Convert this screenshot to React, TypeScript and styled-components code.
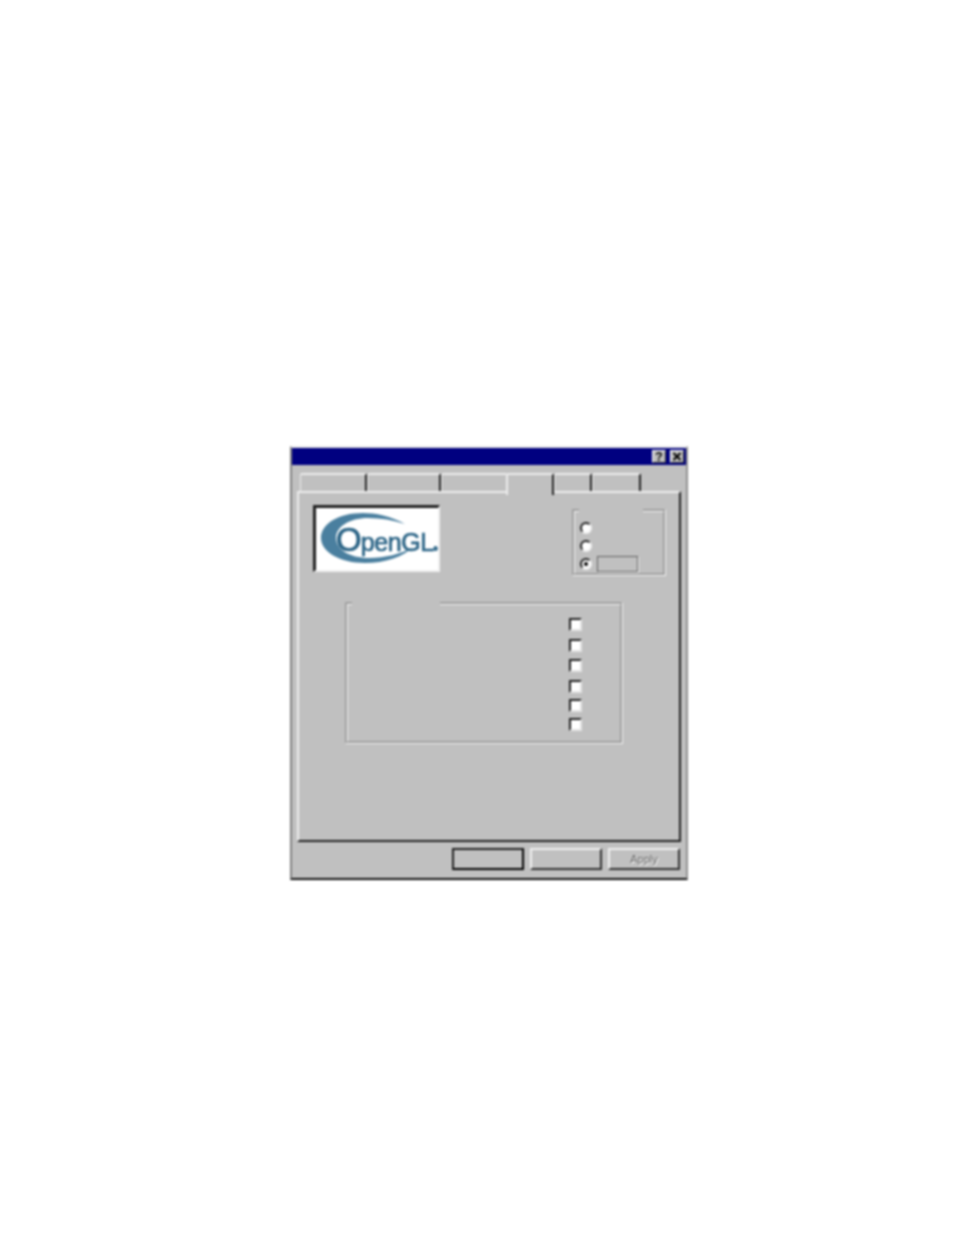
import React from "react";
import styled, { createGlobalStyle } from "styled-components";

const Global = createGlobalStyle`
  html, body { margin: 0; padding: 0; background: #fff; }
  body { font-family: "Liberation Sans", Arial, sans-serif; font-size: 11px; }
`;

const Page = styled.div`
  width: 954px;
  height: 1235px;
  box-sizing: border-box;
  padding: 446px 0 0 290px;
`;

const Window = styled.div`
  width: 398px;
  height: 434px;
  box-sizing: border-box;
  background: #c0c0c0;
  border-style: solid;
  border-width: 2px;
  border-color: #e8e8e8 #909090 #101010 #808080;
  display: flex;
  flex-direction: column;
  filter: blur(0.8px);
`;

const TitleBar = styled.div`
  height: 17px;
  flex: none;
  background: #000080;
  display: flex;
  align-items: center;
  justify-content: flex-end;
  gap: 4px;
  padding-right: 2px;
`;

const TitleButton = styled.div`
  width: 14px;
  height: 13px;
  box-sizing: border-box;
  background: #c0c0c0;
  border-style: solid;
  border-width: 1px;
  border-color: #fff #303030 #303030 #fff;
  display: flex;
  align-items: center;
  justify-content: center;
  color: #000;
  font-weight: bold;
  font-size: 12px;
  line-height: 1;
`;

const TabRow = styled.div`
  display: flex;
  align-items: flex-end;
  height: 20px;
  margin: 8px 0 -2px;
  padding-left: 8px;
  position: relative;
  z-index: 1;
`;

const Tab = styled.div<{ $w: number; $active?: boolean }>`
  width: ${(p) => p.$w + (p.$active ? 2 : 0)}px;
  height: ${(p) => (p.$active ? 22 : 18)}px;
  margin-bottom: ${(p) => (p.$active ? -2 : 2)}px;
  margin-left: ${(p) => (p.$active ? -2 : 0)}px;
  position: relative;
  z-index: ${(p) => (p.$active ? 1 : 0)};
  box-sizing: border-box;
  background: #c0c0c0;
  border-style: solid;
  border-width: 2px 2px 0 ${(p) => (p.$active ? 2 : 1)}px;
  border-color: #ececec #202020 transparent #ececec;
  border-radius: 2px 2px 0 0;
`;

const Panel = styled.div`
  height: 351px;
  flex: none;
  margin: 0 5px;
  box-sizing: border-box;
  background: #c0c0c0;
  border-style: solid;
  border-width: 2px;
  border-color: #ececec #202020 #202020 #ececec;
  padding: 12px 13px 0 14px;
`;

const TopRow = styled.div`
  display: flex;
  justify-content: space-between;
  align-items: flex-start;
`;

const LogoFrame = styled.div`
  width: 127px;
  height: 67px;
  box-sizing: border-box;
  background: #fff;
  border-style: solid;
  border-width: 3px 2px 2px 3px;
  border-color: #202020 #f0f0f0 #f0f0f0 #202020;
  position: relative;
  overflow: hidden;
`;

const Swoosh = styled.svg`
  display: block;
  width: 122px;
  height: 62px;
`;

const LogoWord = styled.div`
  position: absolute;
  left: 20px;
  top: 16px;
  display: flex;
  align-items: baseline;
  color: #2b6486;
  font-family: "Liberation Sans", Arial, sans-serif;
  line-height: 32px;
  white-space: nowrap;
  -webkit-text-stroke: 0.7px #2b6486;
`;

const LogoO = styled.span`
  font-size: 33px;
  letter-spacing: -1px;
`;

const LogoRest = styled.span`
  font-size: 25px;
  letter-spacing: -0.4px;
`;

const LogoDot = styled.span`
  font-size: 5px;
`;

const Group = styled.fieldset<{ $w: number; $h: number; $top: number; $left: number; $pad: string }>`
  width: ${(p) => p.$w}px;
  height: ${(p) => p.$h}px;
  box-sizing: border-box;
  margin: ${(p) => p.$top}px 0 0 ${(p) => p.$left}px;
  padding: ${(p) => p.$pad};
  min-width: 0;
  border: 3px groove #f4f4f4;
  display: flex;
  flex-direction: column;
`;

const GroupGap = styled.legend<{ $w: number; $at: number }>`
  width: ${(p) => p.$w}px;
  height: 3px;
  margin-left: ${(p) => p.$at}px;
  padding: 0;
  box-sizing: border-box;
`;

const RadioRow = styled.div`
  height: 18px;
  display: flex;
  align-items: center;
  gap: 5px;
  flex: none;
  &:last-child { height: 17px; }
`;

const Radio = styled.span<{ $on?: boolean }>`
  width: 12px;
  height: 12px;
  box-sizing: border-box;
  flex: none;
  border-radius: 50%;
  background: #fff;
  border-style: solid;
  border-width: 2px;
  border-color: #202020 #f0f0f0 #f0f0f0 #202020;
  display: flex;
  align-items: center;
  justify-content: center;
  &::after {
    content: "";
    width: 4px;
    height: 4px;
    border-radius: 50%;
    background: ${(p) => (p.$on ? "#000" : "transparent")};
  }
`;

const Field = styled.div`
  width: 41px;
  height: 16px;
  box-sizing: border-box;
  background: #c0c0c0;
  border: 1px solid #606060;
  box-shadow: 1px 1px 0 #f0f0f0;
`;

const CheckRow = styled.div<{ $h: number }>`
  height: ${(p) => p.$h}px;
  flex: none;
  display: flex;
  align-items: center;
  justify-content: flex-end;
`;

const Check = styled.span`
  width: 13px;
  height: 13px;
  box-sizing: border-box;
  background: #fff;
  border-style: solid;
  border-width: 2px;
  border-color: #202020 #e4e4e4 #e4e4e4 #202020;
`;

const Footer = styled.div`
  display: flex;
  justify-content: flex-end;
  gap: 6px;
  padding: 6px 6px 0 0;
`;

const Button = styled.button<{ $default?: boolean }>`
  width: 72px;
  height: 22px;
  padding: 0;
  box-sizing: border-box;
  background: #c0c0c0;
  border-style: solid;
  border-width: 2px;
  border-color: ${(p) =>
    p.$default ? "#202020 #000 #000 #202020" : "#f0f0f0 #303030 #303030 #f0f0f0"};
  font-family: "Liberation Sans", Arial, sans-serif;
  font-size: 11px;
  color: #606060;
  text-shadow: 1px 1px 0 #fff;
`;

const checkHeights = [21, 20, 21, 20, 19, 18];
const tabs = [
  { w: 67 },
  { w: 74 },
  { w: 67 },
  { w: 46, active: true },
  { w: 38 },
  { w: 49 },
];

export default function App() {
  return (
    <>
      <Global />
      <Page>
        <Window>
          <TitleBar>
            <TitleButton>?</TitleButton>
            <TitleButton>
              <svg width="10" height="9" viewBox="0 0 10 9">
                <path d="M1.5 1 L8.5 8 M8.5 1 L1.5 8" stroke="#000" strokeWidth="2" />
              </svg>
            </TitleButton>
          </TitleBar>
          <TabRow>
            {tabs.map((t, i) => (
              <Tab key={i} $w={t.w} $active={t.active} />
            ))}
          </TabRow>
          <Panel>
            <TopRow>
              <LogoFrame>
                <Swoosh viewBox="1 1 122 62">
                  <path
                    d="M90 17 C76 9 60 6 48 6 C23 6 6 17 6 31 C6 45 25 56 50 56 C70 56 88 50 98 40 C86 47 70 51 54 51 C34 51 21 42 21 31 C21 20 34 11 53 11 C66 11 78 13 90 17 Z"
                    fill="#4a7f9f"
                  />
                </Swoosh>
                <LogoWord>
                  <LogoO>O</LogoO>
                  <LogoRest>penGL</LogoRest>
                  <LogoDot>®</LogoDot>
                </LogoWord>
              </LogoFrame>
              <Group $w={94} $h={67} $top={4} $left={0} $pad="7px 0 0 5px">
                <GroupGap $w={64} $at={-1} />
                <RadioRow><Radio /></RadioRow>
                <RadioRow><Radio /></RadioRow>
                <RadioRow><Radio $on /><Field /></RadioRow>
              </Group>
            </TopRow>
            <Group $w={278} $h={142} $top={26} $left={32} $pad="9px 38px 0 0">
              <GroupGap $w={88} $at={4} />
              {checkHeights.map((h, i) => (
                <CheckRow key={i} $h={h}><Check /></CheckRow>
              ))}
            </Group>
          </Panel>
          <Footer>
            <Button $default />
            <Button />
            <Button disabled>Apply</Button>
          </Footer>
        </Window>
      </Page>
    </>
  );
}
